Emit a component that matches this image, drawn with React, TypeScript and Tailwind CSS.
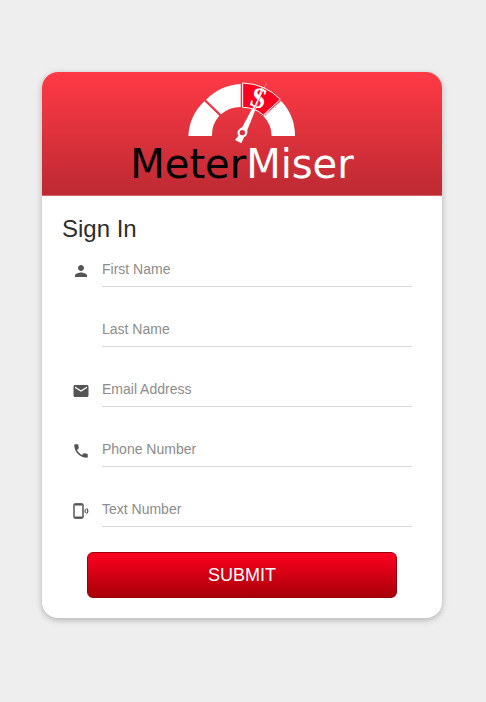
import { MdPerson, MdEmail, MdPhone } from "react-icons/md";
import type { ReactNode } from "react";

function GaugeLogo() {
  return (
    <svg viewBox="18 18 336 210" className="h-[70px] w-28" aria-hidden="true">
      <g fill="#fff">
        <path d="M25 198A160 156 0 0 1 73 94L118 137A88 86 0 0 0 96 198Z" />
        <path d="M78 89A160 156 0 0 1 182 42V111A90 88 0 0 0 123 133Z" />
        <path d="M303 92A160 156 0 0 1 345 198H275A90 88 0 0 0 250 138Z" />
      </g>
      <path
        d="M188 39A166 164 0 0 1 301 88L250 135A92 90 0 0 0 188 112Z"
        fill="#f90020"
        stroke="#fff"
        strokeWidth="3"
      />
      <path d="M305 90L254 139" stroke="#f4404c" strokeWidth="1.5" />
      <text
        x="235"
        y="113"
        textAnchor="middle"
        transform="rotate(18 235 87)"
        fill="#fff"
        className="font-['Liberation_Serif',serif] text-[88px] font-bold"
      >
        $
      </text>
      <path d="M263 34L217 118L222 120Z" fill="#fff" />
      <path d="M244 76L221 124" stroke="#f90020" strokeWidth="1.500" />
      <path
        d="M216 116L226 120L202 180Q205 195 192 202L184 220L165 210L175 197Q168 184 179 176L187 171Z"
        fill="#fff"
      />
      <circle cx="187" cy="188" r="8" fill="#dd303a" />
    </svg>
  );
}

function TextPhoneIcon() {
  return (
    <svg viewBox="0 0 18 18" className="size-[18px]" fill="none" stroke="currentColor" aria-hidden="true">
      <rect x="2" y="2" width="9" height="14" rx="1" strokeWidth="1.500" />
      <path d="M3 2.500H10M3 15.500H10" strokeWidth="2" />
      <path d="M13.500 7.200Q12.500 9 13.500 10.800M14.500 6.500Q17.200 9 14.500 11.500" strokeWidth="1.200" />
    </svg>
  );
}

type FieldProps = { id: string; label: string; type: string; icon?: ReactNode };

function Field({ id, label, type, icon }: FieldProps) {
  return (
    <div className="flex items-start gap-3">
      <label htmlFor={id} aria-label={label} className="flex h-8 w-[18px] shrink-0 items-center text-[#555]">
        {icon}
      </label>
      <input
        id={id}
        name={id}
        type={type}
        placeholder={label}
        className="h-8 min-w-0 flex-1 border-b border-[#d9d9d9] bg-transparent pb-1 text-sm text-[#333] outline-none placeholder:text-[#8c8c8c] focus:border-[#d0021b]"
      />
    </div>
  );
}

const fields: FieldProps[] = [
  { id: "firstName", label: "First Name", type: "text", icon: <MdPerson size={18} /> },
  { id: "lastName", label: "Last Name", type: "text" },
  { id: "email", label: "Email Address", type: "email", icon: <MdEmail size={18} /> },
  { id: "phone", label: "Phone Number", type: "tel", icon: <MdPhone size={18} /> },
  { id: "textNumber", label: "Text Number", type: "tel", icon: <TextPhoneIcon /> },
];

export default function App() {
  return (
    <div className="min-h-screen bg-[#eee] py-[72px] pr-11 pl-[42px] font-['Liberation_Sans',Arial,sans-serif]">
      <main className="mx-auto w-full max-w-[400px] overflow-hidden rounded-2xl bg-white shadow-[0_2px_6px_rgba(0,0,0,0.25)]">
        <header className="flex h-[124px] flex-col items-center border-b border-[#d8626a] bg-linear-to-b from-[#ff3a46] to-[#bd2a33] pt-1">
          <GaugeLogo />
          <div className="font-['DejaVu_Sans',sans-serif] text-[40px] leading-9 whitespace-nowrap">
            <span className="text-black">Meter</span>
            <span className="text-white">Miser</span>
          </div>
        </header>
        <form className="px-5 pt-[17px] pb-5" onSubmit={(e) => e.preventDefault()}>
          <h1 className="text-2xl leading-8 text-[#2d2d2d]">Sign In</h1>
          <div className="mt-[10px] flex flex-col gap-7 px-[10px]">
            {fields.map((f) => (
              <Field key={f.id} {...f} />
            ))}
          </div>
          <div className="mt-[25px] px-[25px]">
            <button
              type="submit"
              className="h-[46px] w-full rounded-md border border-[#98000f] bg-linear-to-b from-[#ff001f] to-[#a80009] text-lg text-white"
            >
              SUBMIT
            </button>
          </div>
        </form>
      </main>
    </div>
  );
}
